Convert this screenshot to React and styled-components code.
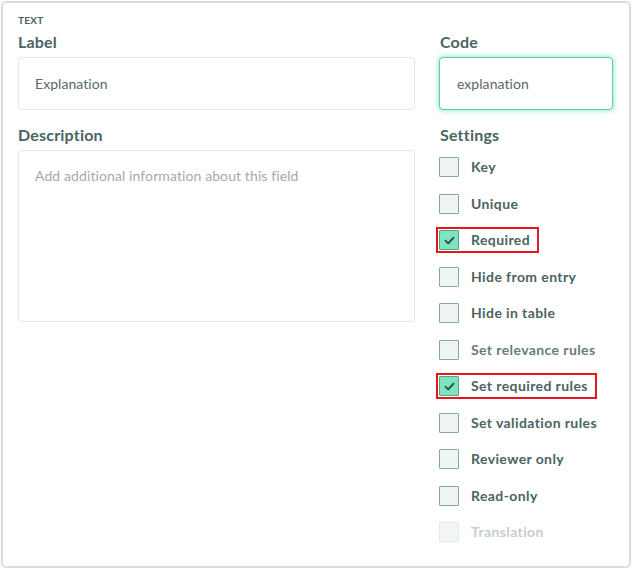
import React from "react";
import styled, { createGlobalStyle, css } from "styled-components";

const GlobalStyle = createGlobalStyle`
  * { box-sizing: border-box; }
  body {
    margin: 0;
    background: #ffffff;
    font-family: "Lato", "Open Sans", sans-serif;
  }
`;

const Card = styled.div`
  margin: 1px;
  width: 630px;
  height: 567px;
  border: 2px solid #dcdcdc;
  border-radius: 5px;
  padding: 10px 15px 0 15px;
  background: #fff;
`;

const TypeTag = styled.div`
  font-size: 10px;
  font-weight: 700;
  line-height: 14px;
  letter-spacing: 0.3px;
  color: #4a6161;
  margin-bottom: 5px;
`;

const Grid = styled.div`
  display: grid;
  grid-template-columns: 397px 174px;
  column-gap: 24px;
  row-gap: 15px;
  align-items: start;
`;

const Field = styled.div`
  display: flex;
  flex-direction: column;
`;

const FieldLabel = styled.label`
  font-size: 16px;
  font-weight: 700;
  line-height: 20px;
  letter-spacing: 0.2px;
  color: #4b6363;
  margin-bottom: 5px;
  padding-left: ${p => (p.$inset ? "1px" : "0")};
`;

const TextInput = styled.input`
  height: 53px;
  width: 100%;
  padding: 0 16px;
  font-family: inherit;
  font-size: 14px;
  letter-spacing: 0.05px;
  color: #5b6868;
  background: #fff;
  border: 1px solid #e3e8e8;
  border-radius: 4px;
  outline: none;
  ${p => p.$focused && css`
    border: 1.5px solid #52d4a4;
    box-shadow: 0 0 5px 1px rgba(82, 212, 164, 0.55);
    padding-left: 17px;
  `}
`;

const TextArea = styled.textarea`
  height: 172px;
  width: 100%;
  padding: 15px 16px;
  resize: none;
  font-family: inherit;
  font-size: 14px;
  line-height: 20px;
  letter-spacing: 0.1px;
  color: #5b6868;
  border: 1px solid #e3e8e8;
  border-radius: 4px;
  outline: none;
  &::placeholder { color: #a2abab; }
`;

const SettingsList = styled.div`
  display: flex;
  flex-direction: column;
  align-items: flex-start;
  gap: 16.5px;
  margin-top: 7px;
`;

const Row = styled.div`
  display: inline-flex;
  align-items: center;
  gap: 12px;
  height: 20px;
  padding-right: ${p => (p.$marked ? "6px" : "0")};
  ${p => p.$marked && css`
    outline: 2px solid #e8161c;
    outline-offset: 1px;
  `}
`;

const Box = styled.span`
  width: 20px;
  height: 20px;
  flex: none;
  display: flex;
  align-items: center;
  justify-content: center;
  border: 1px solid #82aaa4;
  background: #eef5f4;
  border-radius: 1px;
  ${p => p.$checked && css`
    background: #80e3bf;
    border-color: #4aa987;
  `}
  ${p => p.$disabled && css`
    background: #f2f6f6;
    border-color: #e6ecec;
  `}
`;

const RowText = styled.span`
  font-size: 14px;
  font-weight: 700;
  line-height: 20px;
  letter-spacing: 0.4px;
  color: ${p => p.$tone || "#4b6363"};
`;

const Check = () => (
  <svg width="11" height="9" viewBox="0 0 12 10">
    <path d="M1.5 5.2 L4.6 8.2 L10.5 1.8" fill="none" stroke="#2c4a45" strokeWidth="2" strokeLinecap="round" strokeLinejoin="round" />
  </svg>
);

const settings = [
  { label: "Key" },
  { label: "Unique" },
  { label: "Required", checked: true, marked: true },
  { label: "Hide from entry" },
  { label: "Hide in table" },
  { label: "Set relevance rules", tone: "#667c7c" },
  { label: "Set required rules", checked: true, marked: true },
  { label: "Set validation rules" },
  { label: "Reviewer only" },
  { label: "Read-only" },
  { label: "Translation", disabled: true, tone: "#c6cdcd" },
];

export default function App() {
  return (
    <>
      <GlobalStyle />
      <Card>
        <TypeTag>TEXT</TypeTag>
        <Grid>
          <Field>
            <FieldLabel>Label</FieldLabel>
            <TextInput readOnly defaultValue="Explanation" />
          </Field>
          <Field>
            <FieldLabel $inset>Code</FieldLabel>
            <TextInput readOnly $focused defaultValue="explanation" />
          </Field>
          <Field>
            <FieldLabel>Description</FieldLabel>
            <TextArea readOnly placeholder="Add additional information about this field" />
          </Field>
          <Field>
            <FieldLabel $inset>Settings</FieldLabel>
            <SettingsList>
              {settings.map(s => (
                <Row key={s.label} $marked={s.marked}>
                  <Box $checked={s.checked} $disabled={s.disabled}>
                    {s.checked && <Check />}
                  </Box>
                  <RowText $tone={s.tone}>{s.label}</RowText>
                </Row>
              ))}
            </SettingsList>
          </Field>
        </Grid>
      </Card>
    </>
  );
}
